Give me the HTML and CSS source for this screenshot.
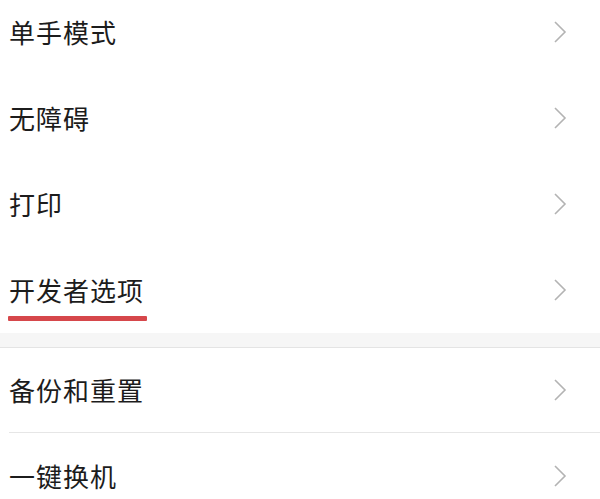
FILE: index.html
```html
<!DOCTYPE html>
<html lang="zh-CN">
<head>
<meta charset="utf-8">
<title>设置</title>
<link rel="stylesheet" href="styles.css">
</head>
<body>
<div class="page">
  <div class="group group-first">
    <div class="row"><span class="label">单手模式</span><svg class="chev" viewBox="0 0 14 24" width="14" height="24"><polyline points="2,2 12,12 2,22"/></svg></div>
    <div class="row"><span class="label">无障碍</span><svg class="chev" viewBox="0 0 14 24" width="14" height="24"><polyline points="2,2 12,12 2,22"/></svg></div>
    <div class="row"><span class="label">打印</span><svg class="chev" viewBox="0 0 14 24" width="14" height="24"><polyline points="2,2 12,12 2,22"/></svg></div>
    <div class="row"><span class="label marked">开发者选项</span><svg class="chev" viewBox="0 0 14 24" width="14" height="24"><polyline points="2,2 12,12 2,22"/></svg></div>
  </div>
  <div class="band"></div>
  <div class="group">
    <div class="row row-b divided"><span class="label">备份和重置</span><svg class="chev" viewBox="0 0 14 24" width="14" height="24"><polyline points="2,2 12,12 2,22"/></svg></div>
    <div class="row row-b"><span class="label">一键换机</span><svg class="chev" viewBox="0 0 14 24" width="14" height="24"><polyline points="2,2 12,12 2,22"/></svg></div>
  </div>
</div>
</body>
</html>
```

FILE: styles.css
```css
html, body {
  margin: 0;
  padding: 0;
  background: #ffffff;
}
body {
  font-family: "Noto Sans CJK SC", "Noto Sans", sans-serif;
  color: #1c1c1c;
  overflow: hidden;
  height: 499px;
}
.page {
  width: 600px;
}
.group-first {
  margin-top: -11px;
}
.row {
  height: 86px;
  display: flex;
  align-items: center;
  justify-content: space-between;
  padding-left: 9px;
  padding-right: 33px;
  box-sizing: border-box;
}
.row-b {
  height: 85px;
}
.divided {
  border-bottom: 1px solid #e6e6e6;
  margin-left: 9px;
  padding-left: 0;
}
.label {
  font-size: 26px;
  letter-spacing: 1px;
  line-height: 1;
  position: relative;
}
.marked::after {
  content: "";
  position: absolute;
  left: -1px;
  right: -3px;
  top: 39px;
  height: 5px;
  background: #d6474b;
  border-radius: 1px;
}
.chev {
  display: block;
  fill: none;
  stroke: #b3b3b3;
  stroke-width: 1.6;
}
.band {
  height: 14px;
  background: #f6f6f6;
  border-bottom: 1px solid #e4e4e4;
}
```
